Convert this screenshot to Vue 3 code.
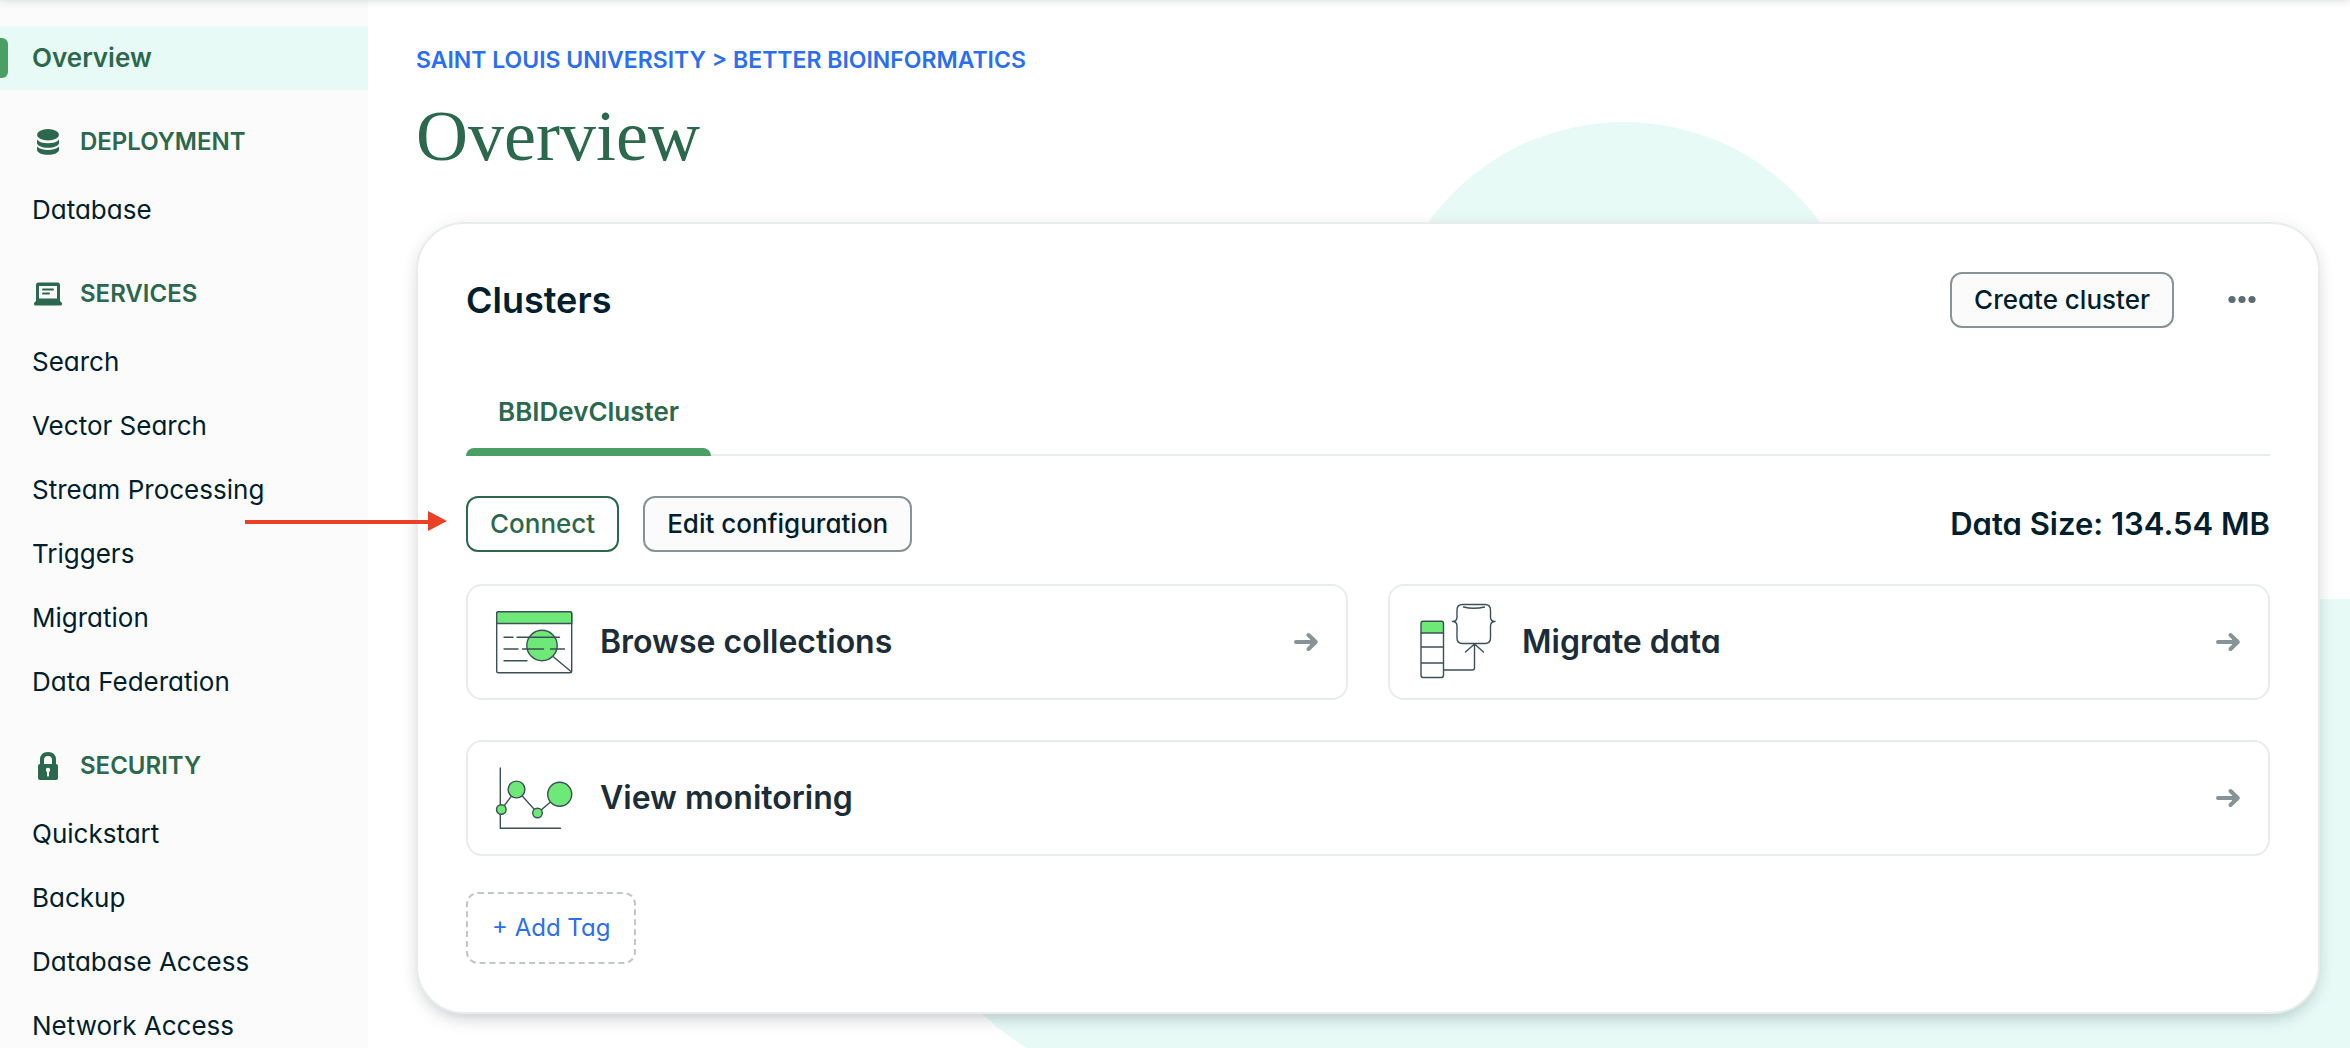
<script setup>
const sections = [
  { title: 'Deployment', icon: 'database', items: ['Database'] },
  {
    title: 'Services',
    icon: 'laptop',
    items: ['Search', 'Vector Search', 'Stream Processing', 'Triggers', 'Migration', 'Data Federation'],
  },
  {
    title: 'Security',
    icon: 'lock',
    items: ['Quickstart', 'Backup', 'Database Access', 'Network Access'],
  },
]

const actions = [
  { label: 'Browse collections', icon: 'browse' },
  { label: 'Migrate data', icon: 'migrate' },
  { label: 'View monitoring', icon: 'monitor', wide: true },
]
</script>

<template>
  <div class="shell">
    <nav class="sidebar" aria-label="Project">
      <a class="item active" href="#" aria-current="page">Overview</a>
      <section v-for="s in sections" :key="s.title" class="group">
        <h2 class="group-title">
          <svg v-if="s.icon === 'database'" width="32" height="32" viewBox="0 0 32 32" fill="currentColor" aria-hidden="true">
            <ellipse cx="16" cy="8.7" rx="11" ry="5.7" />
            <path d="M5 13.4C7 16 11 17.2 16 17.200S25 16 27 13.400V17C27 19.600 22 21.800 16 21.800S5 19.600 5 17Z" />
            <path d="M5 20.600C7 23 11 24 16 24S25 23 27 20.600V23.400C27 26.600 22 28.800 16 28.800S5 26.600 5 23.400Z" />
          </svg>
          <svg v-else-if="s.icon === 'laptop'" width="32" height="32" viewBox="0 0 32 32" fill="currentColor" aria-hidden="true">
            <path fill-rule="evenodd" d="M6.500 4.500H25.500A2.500 2.500 0 0 1 28 7V23L30 25V26Q30 27.500 28.500 27.500H3.500Q2 27.500 2 26V25L4 23V7A2.500 2.500 0 0 1 6.500 4.500ZM7 8V20.500H25V8Z" />
            <rect x="10" y="10.500" width="12" height="2" rx="1" />
            <rect x="10" y="14.500" width="8" height="2" rx="1" />
          </svg>
          <svg v-else width="32" height="32" viewBox="0 0 32 32" aria-hidden="true">
            <path d="M10 15V10Q10 4 16 4T22 10V15" fill="none" stroke="currentColor" stroke-width="4" />
            <path fill-rule="evenodd" fill="currentColor" d="M8 14H24Q26 14 26 16V28Q26 30 24 30H8Q6 30 6 28V16Q6 14 8 14ZM14 18.500V21.500H15V26Q16 27.500 17 26V21.500H18V18.500Q16 17 14 18.500Z" />
          </svg>
          <span>{{ s.title }}</span>
        </h2>
        <a v-for="i in s.items" :key="i" class="item" href="#">{{ i }}</a>
      </section>
    </nav>

    <main class="main">
      <div class="blob blob-circle"></div>
      <div class="blob blob-pill"></div>

      <nav class="crumbs" aria-label="Breadcrumb">
        <a href="#">Saint Louis University</a> &gt; <a href="#">Better Bioinformatics</a>
      </nav>
      <h1 class="title">Overview</h1>

      <section class="panel">
        <header class="panel-head">
          <h2>Clusters</h2>
          <button class="btn" type="button">Create cluster</button>
          <button class="more" type="button" aria-label="More options">
            <svg width="32" height="32" viewBox="0 0 32 32" fill="currentColor" aria-hidden="true">
              <circle cx="6" cy="15.500" r="3.600" />
              <circle cx="16" cy="15.500" r="3.600" />
              <circle cx="26" cy="15.500" r="3.600" />
            </svg>
          </button>
        </header>

        <div class="tabs" role="tablist">
          <button class="tab" type="button" role="tab" aria-selected="true">BBIDevCluster</button>
        </div>

        <div class="toolbar">
          <button class="btn primary" type="button">Connect</button>
          <button class="btn" type="button">Edit configuration</button>
          <strong class="size">Data Size: 134.54 MB</strong>
        </div>

        <div class="actions">
          <a v-for="a in actions" :key="a.label" class="action" :class="{ wide: a.wide }" href="#">
            <svg v-if="a.icon === 'browse'" width="80" height="80" viewBox="0 0 80 80" fill="none" stroke="#3d4f58" stroke-width="1.400" stroke-linecap="round" aria-hidden="true">
              <rect x="2.700" y="9.700" width="75" height="61" rx="1.800" fill="#fff" />
              <path d="M2.700 21.500V11.500Q2.700 9.700 4.500 9.700H75.900Q77.700 9.700 77.700 11.500V21.500Z" fill="#6ee977" />
              <circle cx="48" cy="43.500" r="15.200" fill="#6ee977" />
              <path d="M10 35.300H19M23 35.300H65.500M10 47H24M28.500 47H49.500M56.500 47H70.500M10 58.700H33M59 54.500L77 69.500" />
            </svg>
            <svg v-else-if="a.icon === 'migrate'" width="80" height="80" viewBox="-2 1 80 80" fill="none" stroke="#3d4f58" stroke-width="1.400" stroke-linecap="round" stroke-linejoin="round" aria-hidden="true">
              <path d="M3 32V22.500Q3 20.300 5 20.300H23.500Q25.500 20.300 25.500 22.500V32Z" fill="#6ee977" />
              <path d="M3 32V74Q3 76.500 5 76.500H23.500Q25.500 76.500 25.500 74V32M3 46H25.500M3 62H25.500" />
              <path d="M34.500 20.500C37.500 20.500 39 19 39 16V9Q39 3.500 44.500 3.500H67Q72.500 3.500 72.500 9V16C72.500 19 74 20.500 77 20.500C74 20.500 72.500 22 72.500 25V37Q72.500 42.500 67 42.500H44.500Q39 42.500 39 37V25C39 22 37.500 20.500 34.500 20.500Z" />
              <path d="M45.500 6Q56 8.500 66.500 6M47.500 51L56.500 43L65.500 51M56.500 43V67Q56.500 69 54.500 69H26" />
            </svg>
            <svg v-else width="80" height="80" viewBox="0 0 80 80" fill="none" stroke="#3d4f58" stroke-width="1.400" stroke-linecap="round" aria-hidden="true">
              <path d="M6.300 10V70.300H66.500M7.300 51.500L22.500 31.500L43.500 55L65.500 36.500" />
              <circle cx="7.300" cy="51.500" r="4.800" fill="#6ee977" />
              <circle cx="22.500" cy="31.500" r="8.400" fill="#6ee977" />
              <circle cx="43.500" cy="55" r="4.800" fill="#6ee977" />
              <circle cx="65.700" cy="36.300" r="12" fill="#6ee977" />
            </svg>
            <span class="action-label">{{ a.label }}</span>
            <svg class="go" width="32" height="32" viewBox="0 0 32 32" fill="none" stroke="currentColor" stroke-width="4" stroke-linecap="round" stroke-linejoin="round" aria-hidden="true">
              <path d="M6 16H25M18.500 9L25.800 16L18.500 23" />
              <path d="M21 13L24 16L21 19Z" fill="currentColor" stroke-width="2" />
            </svg>
          </a>
        </div>

        <button class="tag" type="button">+ Add Tag</button>
      </section>
    </main>

    <svg class="pointer" width="202" height="20" viewBox="0 0 202 20" fill="#ea4025" aria-hidden="true">
      <rect y="9" width="186" height="4" />
      <path d="M183 0L202 10L183 20Z" />
    </svg>
  </div>
</template>

<style>
body {
  margin: 0;
}
</style>

<style scoped>
.shell {
  position: relative;
  display: flex;
  height: 100vh;
  overflow: hidden;
  background: #fff;
  color: #001e2b;
  font-family: Inter, "Liberation Sans", sans-serif;
  font-feature-settings: "cv11";
  font-size: 26px;
  line-height: 40px;
}
.shell::before {
  content: "";
  position: absolute;
  z-index: 2;
  top: -10px;
  left: 0;
  right: 0;
  height: 10px;
  box-shadow: 0 0 10px rgba(0, 30, 43, 0.18);
}
.sidebar {
  box-sizing: border-box;
  flex: none;
  width: 368px;
  padding-top: 26px;
  overflow-y: auto;
  scrollbar-width: none;
  background: #fbfbfb;
}
.item {
  display: block;
  padding: 12px 32px;
  color: inherit;
  text-decoration: none;
}
.item.active {
  position: relative;
  background: #e7faf6;
  color: #2b684d;
  font-weight: 600;
}
.item.active::before {
  content: "";
  position: absolute;
  left: 0;
  top: 12px;
  bottom: 12px;
  width: 8px;
  border-radius: 0 6px 6px 0;
  background: #4aa064;
}
.group-title {
  display: flex;
  align-items: center;
  gap: 16px;
  margin: 0;
  padding: 32px 32px 16px;
  color: #2b684d;
  font-size: 24px;
  font-weight: 600;
  text-transform: uppercase;
}
.main {
  position: relative;
  z-index: 0;
  flex: 1;
  min-width: 0;
  padding: 40px 30px 34px 48px;
  overflow: hidden;
}
.blob {
  position: absolute;
  z-index: -1;
  background: #e7faf6;
}
.blob-circle {
  left: 1015px;
  top: 122px;
  width: 482px;
  height: 482px;
  border-radius: 50%;
}
.blob-pill {
  left: 540px;
  right: -260px;
  top: 599px;
  height: 482px;
  border-radius: 241px;
}
.crumbs {
  color: #296ff0;
  font-size: 23px;
  font-weight: 600;
  text-transform: uppercase;
}
.crumbs a {
  color: inherit;
  text-decoration: none;
}
.title {
  margin: 16px 0 46px;
  color: #2b684d;
  font-family: "Liberation Serif", serif;
  font-size: 72px;
  font-weight: 400;
  line-height: 80px;
}
.panel {
  padding: 48px;
  border: 2px solid #e8edeb;
  border-radius: 48px;
  background: #fff;
  box-shadow: 0 8px 20px -8px rgba(0, 30, 43, 0.3), 0 0 20px rgba(0, 30, 43, 0.04);
}
.panel-head {
  display: flex;
  align-items: center;
}
.panel-head h2 {
  flex: 1;
  margin: 0;
  font-size: 36px;
  font-weight: 600;
}
button {
  font: inherit;
  font-feature-settings: inherit;
  cursor: pointer;
}
.btn {
  padding: 6px 22px;
  border: 2px solid #889397;
  border-radius: 12px;
  background: #fbfbfb;
  color: #001e2b;
  font-weight: 500;
}
.btn.primary {
  border-color: #2b684d;
  background: #fff;
  color: #2b684d;
}
.more {
  display: flex;
  margin-left: 40px;
  padding: 12px;
  border: 0;
  background: none;
  color: #5c6c75;
}
.tabs {
  display: flex;
  margin: 48px 0 40px;
  box-shadow: inset 0 -2px #e8edeb;
}
.tab {
  position: relative;
  padding: 16px 32px 24px;
  border: 0;
  background: none;
  color: #2b684d;
  font-weight: 600;
}
.tab::after {
  content: "";
  position: absolute;
  left: 0;
  right: 0;
  bottom: 0;
  height: 8px;
  border-radius: 8px 8px 0 0;
  background: #4aa064;
}
.toolbar {
  display: flex;
  align-items: center;
  gap: 24px;
}
.size {
  margin-left: auto;
  font-size: 31px;
  font-weight: 600;
}
.actions {
  display: grid;
  grid-template-columns: 1fr 1fr;
  gap: 40px;
  margin: 32px 0 36px;
}
.action {
  display: flex;
  align-items: center;
  gap: 26px;
  padding: 16px 24px 16px 26px;
  border: 2px solid #e8edeb;
  border-radius: 16px;
  background: #fff;
  color: #1c2d38;
  font-size: 32px;
  font-weight: 600;
  text-decoration: none;
}
.action.wide {
  grid-column: 1 / -1;
}
.action-label {
  flex: 1;
}
.go {
  color: #889397;
}
.tag {
  display: block;
  padding: 14px 24px;
  border: 2px dashed #c1c7c6;
  border-radius: 12px;
  background: none;
  color: #296ff0;
  font-size: 24px;
}
.pointer {
  position: absolute;
  z-index: 1;
  left: 245px;
  top: 511px;
}
</style>
